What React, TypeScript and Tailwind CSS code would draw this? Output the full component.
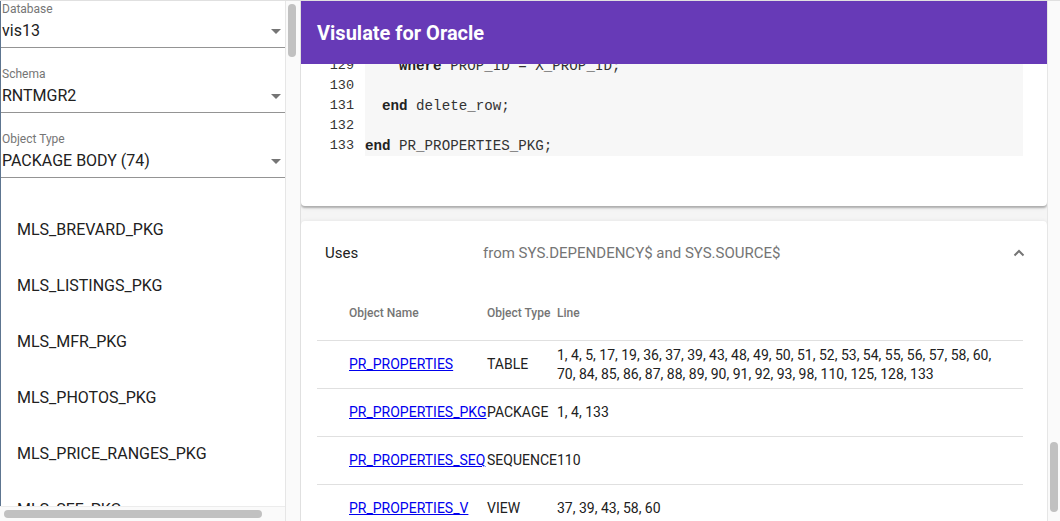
import React from "react";

const items = [
  "MLS_BREVARD_PKG",
  "MLS_LISTINGS_PKG",
  "MLS_MFR_PKG",
  "MLS_PHOTOS_PKG",
  "MLS_PRICE_RANGES_PKG",
  "MLS_SFF_PKG",
];

function Arrow() {
  return (
    <svg width="10" height="5" viewBox="0 0 10 5" className="shrink-0">
      <path d="M0 0 L10 0 L5 5 Z" fill="#757575" />
    </svg>
  );
}

function Field({ label, value, mt }: { label: string; value: string; mt: string }) {
  return (
    <div className={`${mt} border-b border-[#949494] pb-[4px]`}>
      <div className="h-[16px] pl-[1px] text-[12px] leading-[16px] text-[#757575]">{label}</div>
      <div className="mt-[2px] flex h-[24px] items-center justify-between pl-[1px] pr-[4px]">
        <span className="text-[16px] leading-[24px] text-[#212121]">{value}</span>
        <Arrow />
      </div>
    </div>
  );
}

const code: { n: number; parts: { t: string; b?: boolean }[] }[] = [
  { n: 129, parts: [{ t: "    " }, { t: "where", b: true }, { t: " PROP_ID = X_PROP_ID;" }] },
  { n: 130, parts: [{ t: "" }] },
  { n: 131, parts: [{ t: "  " }, { t: "end", b: true }, { t: " delete_row;" }] },
  { n: 132, parts: [{ t: "" }] },
  { n: 133, parts: [{ t: "end", b: true }, { t: " PR_PROPERTIES_PKG;" }] },
];

const rows = [
  {
    name: "PR_PROPERTIES",
    type: "TABLE",
    lines:
      "1, 4, 5, 17, 19, 36, 37, 39, 43, 48, 49, 50, 51, 52, 53, 54, 55, 56, 57, 58, 60, 70, 84, 85, 86, 87, 88, 89, 90, 91, 92, 93, 98, 110, 125, 128, 133",
  },
  { name: "PR_PROPERTIES_PKG", type: "PACKAGE", lines: "1, 4, 133" },
  { name: "PR_PROPERTIES_SEQ", type: "SEQUENCE", lines: "110" },
  { name: "PR_PROPERTIES_V", type: "VIEW", lines: "37, 39, 43, 58, 60" },
];

export default function App() {
  return (
    <div
      className="flex h-[521px] w-[1060px] overflow-hidden border-t border-[#e0e0e0] bg-white"
      style={{ fontFamily: "Roboto, 'Noto Sans', sans-serif" }}
    >
      {/* Sidebar */}
      <div className="flex h-full w-[301px] shrink-0 border-r border-[#e0e0e0]">
        <div className="flex h-full w-[286px] shrink-0 flex-col border-r border-[#e6e6e6]">
          <div className="min-h-0 flex-1 overflow-hidden border-l border-[#5d7590]">
            <Field label="Database" value="vis13" mt="mt-0" />
            <Field label="Schema" value="RNTMGR2" mt="mt-[18px]" />
            <Field label="Object Type" value="PACKAGE BODY (74)" mt="mt-[18px]" />
            <div className="mt-[24px]">
              {items.map((it) => (
                <div key={it} className="flex h-[56px] items-center pl-[16px] text-[16px] text-[#212121]">
                  {it}
                </div>
              ))}
            </div>
          </div>
          <div className="h-[15px] shrink-0 border-t border-[#ececec] bg-[#fafafa] pl-[4px] pt-[3px]">
            <div className="h-[8px] w-[258px] rounded-full bg-[#c1c1c1]" />
          </div>
        </div>
        <div className="h-full flex-1 bg-[#fafafa] pl-[2px] pt-[3px]">
          <div className="h-[53px] w-[8px] rounded-full bg-[#c1c1c1]" />
        </div>
      </div>

      {/* Main */}
      <div className="flex h-full min-w-0 flex-1 flex-col">
        <div className="flex h-[63px] shrink-0 items-center bg-[#673ab7] pl-[16px]">
          <span className="text-[20px] font-bold text-white">Visulate for Oracle</span>
        </div>
        <div className="min-h-0 flex-1 overflow-hidden bg-[#f5f5f5]">
          {/* Code card */}
          <div className="rounded-b-[4px] bg-white pb-[50px] shadow-[0_2px_2px_rgba(0,0,0,0.24),0_1px_5px_rgba(0,0,0,0.12)]">
            <div className="-mt-[8px] flex" style={{ fontFamily: "'Liberation Mono', monospace" }}>
              <div className="w-[64px] shrink-0 pr-[11px] text-right text-[13.5px] leading-[20px] text-[#333]">
                {code.map((l) => (
                  <div key={l.n}>{l.n}</div>
                ))}
              </div>
              <div className="mr-[24px] flex-1 bg-[#f7f7f7] text-[14.2px] leading-[20px] text-[#333]">
                {code.map((l) => (
                  <div key={l.n} className="h-[20px] whitespace-pre">
                    {l.parts.map((p, i) =>
                      p.b ? (
                        <b key={i} className="font-bold text-[#222]">
                          {p.t}
                        </b>
                      ) : (
                        <span key={i}>{p.t}</span>
                      )
                    )}
                  </div>
                ))}
              </div>
            </div>
          </div>

          {/* Uses card */}
          <div className="mt-[15px] rounded-t-[4px] bg-white shadow-[0_2px_2px_rgba(0,0,0,0.24),0_1px_5px_rgba(0,0,0,0.12)]">
            <div className="flex h-[64px] items-center px-[24px]">
              <div className="w-[142px] shrink-0 text-[15px] text-[#212121]">Uses</div>
              <div className="ml-[16px] flex-1 text-[15px] text-[#757575]">from SYS.DEPENDENCY$ and SYS.SOURCE$</div>
              <svg width="12" height="8" viewBox="0 0 12 8" className="mr-[-2px]">
                <path d="M1.5 6.5 L6 2 L10.5 6.5" fill="none" stroke="#757575" strokeWidth="2" />
              </svg>
            </div>
            <div className="pb-[16px] pl-[16px] pr-[24px]">
              <div className="grid h-[56px] grid-cols-[170px_70px_1fr] items-center border-b border-[#e0e0e0] text-[12px] font-medium text-[#757575]">
                <div className="pl-[32px]">Object Name</div>
                <div>Object Type</div>
                <div>Line</div>
              </div>
              {rows.map((r) => (
                <div
                  key={r.name}
                  className="grid min-h-[48px] grid-cols-[170px_70px_1fr] items-center border-b border-[#e0e0e0] text-[14px] text-[#212121]"
                >
                  <div className="whitespace-nowrap pl-[32px]">
                    <a href="#" className="text-[#0000ee] underline">
                      {r.name}
                    </a>
                  </div>
                  <div className="whitespace-nowrap">{r.type}</div>
                  <div className="max-w-[445px] leading-[19px]">{r.lines}</div>
                </div>
              ))}
            </div>
          </div>
        </div>
      </div>

      {/* Right scrollbar */}
      <div className="flex h-full w-[13px] shrink-0 flex-col border-l border-[#e6e6e6] bg-[#fafafa] pl-[2px]">
        <div className="h-[441px]" />
        <div className="h-[70px] w-[8px] rounded-full bg-[#c1c1c1]" />
      </div>
    </div>
  );
}
